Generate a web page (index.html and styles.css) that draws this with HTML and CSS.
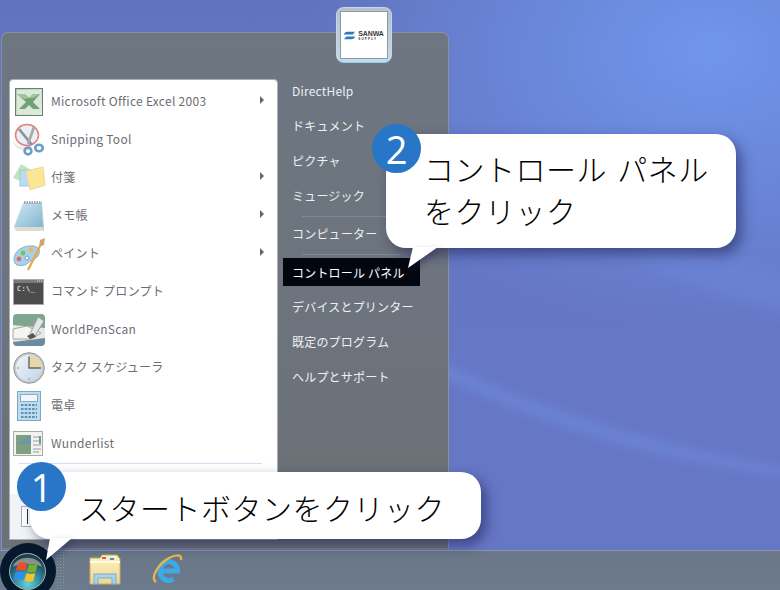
FILE: index.html
```html
<!DOCTYPE html>
<html lang="ja">
<head>
<meta charset="utf-8">
<title>スタートメニュー</title>
<link rel="stylesheet" href="styles.css">
</head>
<body>
<div class="desktop">
  <svg class="wall" viewBox="0 0 780 590"><defs><filter id="soft" x="-20%" y="-50%" width="140%" height="200%"><feGaussianBlur stdDeviation="5"/></filter><filter id="softer" x="-20%" y="-50%" width="140%" height="200%"><feGaussianBlur stdDeviation="10"/></filter></defs><path d="M430 372C530 420 640 462 800 478L800 470C660 446 540 410 430 356z" fill="#7392e4" opacity=".4" filter="url(#soft)"/><path d="M640 262C690 280 740 300 800 318L800 280C750 268 700 256 640 250z" fill="#7392e4" opacity=".3" filter="url(#softer)"/></svg>
  <div class="start-menu">
    <div class="pane-left">
      <ul class="app-list">
        <li class="app"><svg class="icon" viewBox="0 0 32 32"><defs><linearGradient id="xl" x1="0" y1="0" x2="1" y2="1"><stop offset="0" stop-color="#a9c8a8"/><stop offset="1" stop-color="#e9f0e6"/></linearGradient></defs><rect x="2.500" y="2.500" width="27" height="27" fill="url(#xl)" stroke="#62836c"/><rect x="4" y="4" width="24" height="24" fill="#dde8da"/><path d="M4 8h8l4 4 4-4h7l-7 8 7 7h-7l-4-4-4 4H6l7-7z" fill="#6fa374"/><path d="M4 8h8l4 4 4-4h7l-7 4h-4l-4 1-3-1z" fill="#9fc6a0"/></svg><span class="label">Microsoft Office Excel 2003</span><i class="arrow"></i></li>
        <li class="app"><svg class="icon" viewBox="0 0 32 32"><ellipse cx="14" cy="11" rx="11.500" ry="10.500" fill="#e9eff5" stroke="#e4817e" stroke-width="1.5"/><path d="M0 17c3 6 13 7 19 4l-2 5C9 28 1 24 0 17z" fill="#ece8e4"/><path d="M6 5l13 16" stroke="#8a9096" stroke-width="2.600"/><path d="M21 3L15 20" stroke="#a4a9ae" stroke-width="2.600"/><circle cx="15" cy="27" r="3.400" fill="none" stroke="#6d9cc4" stroke-width="2.600"/><ellipse cx="26" cy="24" rx="3.800" ry="3.200" fill="none" stroke="#6d9cc4" stroke-width="2.600"/></svg><span class="label">Snipping Tool</span></li>
        <li class="app"><svg class="icon" viewBox="0 0 32 32"><path d="M0 16L8 2l10 6-6 13z" fill="#c2e6b8"/><rect x="7" y="8" width="13" height="16" fill="#b9dcf2" stroke="#9cc7e6"/><path d="M13 9l17-4 2 18-15 5z" fill="#fbe695" stroke="#ecdb96"/></svg><span class="label">付箋</span><i class="arrow"></i></li>
        <li class="app"><svg class="icon" viewBox="0 0 32 32"><defs><linearGradient id="note" x1="0" y1="0" x2="1" y2="1"><stop offset="0" stop-color="#d3e8f2"/><stop offset="1" stop-color="#7fb6cf"/></linearGradient></defs><path d="M1 27L10 3h19l1 24z" fill="url(#note)"/><path d="M11 2.500h18" stroke="#8b9aa6" stroke-width="2.500" stroke-dasharray="1.500 1"/><path d="M1 27h29l1 4H3z" fill="#dcdcd2"/><path d="M29 3l2 27-1-2z" fill="#b8b8a8"/></svg><span class="label">メモ帳</span><i class="arrow"></i></li>
        <li class="app"><svg class="icon" viewBox="0 0 32 32"><path d="M1 21C1 13 10 7 20 8c6 1 8 5 5 10-3 4-6 3-9 6-3 4-9 4-12 3-2-1-3-3-3-6z" fill="#a9d2e8" stroke="#7fb0cc"/><circle cx="10" cy="15" r="2.400" fill="#7fbf6a"/><circle cx="18" cy="12" r="2.400" fill="#e8b850"/><circle cx="6" cy="21" r="2.400" fill="#df6a6a"/><circle cx="14" cy="20" r="2" fill="#fff" stroke="#6d9cc4"/><path d="M15 32L27 8" stroke="#e8a850" stroke-width="2.400"/><path d="M26 9l1-7 5-2-1 7z" fill="#caa876"/></svg><span class="label">ペイント</span><i class="arrow"></i></li>
        <li class="app"><svg class="icon" viewBox="0 0 32 32"><rect x=".5" y="3.500" width="30" height="25" fill="#7a7a7a" stroke="#a8a8a8"/><rect x="1" y="7" width="29" height="21" fill="#4c4c4c"/><path d="M24 5h5" stroke="#ddd" stroke-dasharray="1 1"/><text class="cmd-text" x="4" y="15">C:\_</text></svg><span class="label">コマンド プロンプト</span></li>
        <li class="app"><svg class="icon" viewBox="0 0 32 32"><rect x="0" y="0" width="32" height="32" rx="4" fill="#e6e8e8"/><path d="M0 4a4 4 0 0 1 4-4h24a4 4 0 0 1 4 4v10L0 11z" fill="#7ea88e"/><path d="M0 15l14-3 14 7-10 6H0z" fill="#f5f5ef" stroke="#a8a8a0"/><path d="M17 20l8-17 6 4-9 15z" fill="#e3e6e8" stroke="#a0a0a0"/><path d="M14 22l6-3 3 4-6 2z" fill="#555"/><path d="M0 28l32-4v4a4 4 0 0 1-4 4H4a4 4 0 0 1-4-4z" fill="#6e8aa0"/></svg><span class="label">WorldPenScan</span></li>
        <li class="app"><svg class="icon" viewBox="0 0 32 32"><defs><linearGradient id="face" x1="0" y1="0" x2="1" y2="1"><stop offset="0" stop-color="#f2f6fa"/><stop offset="1" stop-color="#bfd4e6"/></linearGradient></defs><circle cx="16" cy="16" r="15.300" fill="#c8ccd0" stroke="#8f9498"/><circle cx="16" cy="16" r="13" fill="url(#face)"/><path d="M16 16V3a13 13 0 0 1 13 13z" fill="#e6d8a8"/><path d="M16 5v11h12" stroke="#666" stroke-width="1.400" fill="none"/><path d="M16 4v2M16 26v2M4 16h2M26 16h2" stroke="#889"/></svg><span class="label">タスク スケジューラ</span></li>
        <li class="app"><svg class="icon" viewBox="0 0 32 32"><rect x="4.500" y="1.500" width="23" height="29" fill="#bcdcf0" stroke="#7fa6c2"/><rect x="7.500" y="4.500" width="17" height="7" fill="#f2f6fa" stroke="#8fa8ba"/><path d="M8 15h16M8 19h16M8 23h16M8 27h16" stroke="#5f8fb0" stroke-width="2.200" stroke-dasharray="2.500 1.200"/></svg><span class="label">電卓</span></li>
        <li class="app"><svg class="icon" viewBox="0 0 32 32"><rect x=".5" y="3.500" width="29" height="24" fill="#f1f3f1" stroke="#a8aaa8"/><rect x="3" y="7" width="15" height="19" fill="#7fa07f"/><path d="M3 16l15-9v9z" fill="#6f96a8"/><path d="M20 9h6M20 13h6M20 17h8M20 21h8M20 24h6" stroke="#9a9a9a"/><rect x="26" y="8" width="2" height="8" fill="#6f9f8f"/></svg><span class="label">Wunderlist</span></li>
      </ul>
      <div class="list-rule"></div>
      <div class="search"><div class="search-box"></div></div>
    </div>
    <div class="pane-right">
      <a class="link">DirectHelp</a>
      <a class="link">ドキュメント</a>
      <a class="link">ピクチャ</a>
      <a class="link">ミュージック</a>
      <div class="rule"></div>
      <a class="link link-system">コンピューター</a>
      <div class="rule"></div>
      <a class="link active">コントロール パネル</a>
      <a class="link">デバイスとプリンター</a>
      <a class="link">既定のプログラム</a>
      <a class="link">ヘルプとサポート</a>
    </div>
  </div>
  <div class="user-tile">
    <div class="user-pic">
      <svg class="sanwa-mark" viewBox="0 0 12 12"><path d="M0 5c0-2 2-3 4-3h8L9.500 4.800H5C3 4.800 1 5 0 5zM12 7c0 2-2 3-4 3H0l2.500-2.800H7C9 7.200 11 7 12 7z" fill="#2b79c2"/></svg>
      <div class="sanwa-text"><span class="sanwa-big">SANWA</span><span class="sanwa-small">SUPPLY</span></div>
    </div>
  </div>

  <div class="taskbar">
    <div class="orb-glow"><svg class="orb" viewBox="0 0 38 38"><defs><radialGradient id="o" cx="50%" cy="85%" r="75%"><stop offset="0" stop-color="#63d4d8"/><stop offset=".55" stop-color="#2a7f94"/><stop offset="1" stop-color="#1b3f4c"/></radialGradient></defs><circle cx="19" cy="19" r="18.500" fill="url(#o)" stroke="#aab8bc"/><path d="M4 14C8 2 30 2 34 14 26 10 12 10 4 14z" fill="#d8c8b8" opacity=".55"/><path d="M9 11c3-2 7-2 10-.5l-2 8c-3-1.500-7-1.500-10 0z" fill="#e8502a"/><path d="M20.500 11c3 1.500 6 1.500 9 0l-2 8c-3 1.500-6 1.500-9 0z" fill="#78ad2e"/><path d="M6.500 20c3-1.500 7-1.500 10 0l-2 8c-3-1.500-7-1.500-10 0z" fill="#2f8fe0"/><path d="M18 20.500c3 1.500 6 1.500 9 0l-2 8c-3 1.500-6 1.500-9 0z" fill="#f6c22a"/></svg></div>
    <div class="grip"></div>
    <div class="tasks">
      <svg class="task-icon" viewBox="0 0 32 32"><defs><linearGradient id="fold" x1="0" y1="0" x2="0" y2="1"><stop offset="0" stop-color="#fff4c4"/><stop offset="1" stop-color="#eed58f"/></linearGradient></defs><path d="M1 5h10l2-3h15l3 4v25H1z" fill="url(#fold)" stroke="#c8ac6a"/><rect x="5" y="3" width="4" height="2" fill="#5aa75a"/><rect x="13" y="4" width="4" height="2" fill="#c0675a"/><rect x="21" y="5" width="4" height="2" fill="#4a8fc8"/><path d="M1 9h30" stroke="#fffbe6" stroke-width="2"/><path d="M5 21h22v10h-4v-6H9v6H5z" fill="#a9d2ea" stroke="#79aed0"/></svg>
      <svg class="task-icon" viewBox="0 0 32 32"><path d="M9 18h17.500a8.800 9.500 0 1 0-4 8" fill="none" stroke="#3fa9e6" stroke-width="5"/><path d="M5 29C-1 25 7 11 18 5c7-3.500 13-4 12 2" fill="none" stroke="#e8b840" stroke-width="2.400"/></svg>
    </div>
  </div>

  <div class="bubble bubble-one">
    <p class="bubble-text">スタートボタンをクリック</p>
    <svg class="tail tail-one" viewBox="0 0 26 22"><path d="M4 0L0 22 26 0z" fill="#fff"/></svg>
    <span class="step step-one">1</span>
  </div>
  <div class="bubble bubble-two">
    <p class="bubble-text">コントロール パネル<br>をクリック</p>
    <svg class="tail tail-two" viewBox="0 0 30 21"><path d="M5 0L0 21 30 0z" fill="#fff"/></svg>
    <span class="step step-two">2</span>
  </div>
</div>
</body>
</html>
```
FILE: styles.css
```css
* { box-sizing: border-box; }
html, body { margin: 0; padding: 0; }
body { font-family: "Noto Sans CJK JP", "Noto Sans", sans-serif; }
.desktop {
  position: relative;
  width: 780px;
  height: 590px;
  overflow: hidden;
  background:
    radial-gradient(ellipse 400px 280px at 710px 50px, #7096ec 0%, rgba(112,150,236,0) 100%),
    linear-gradient(180deg, #6173be 0%, #6677c6 60%, #6677c6 100%);
}
.wall { position: absolute; left: 0; top: 0; width: 780px; height: 590px; }
.start-menu {
  position: absolute;
  left: 1px;
  top: 32px;
  width: 448px;
  height: 517px;
  display: flex;
  padding: 46px 0 8px 7px;
  border: 1px solid #8b929a;
  border-bottom-color: #7b8188;
  border-radius: 7px 7px 0 0;
  background: linear-gradient(180deg, #6d7681 0%, #6d747d 50%, #6c7076 100%);
}
.pane-left {
  width: 269px;
  display: flex;
  flex-direction: column;
  background: #fff;
  border: 1px solid #a9b0b8;
  border-radius: 4px 4px 0 0;
}
.app-list {
  list-style: none;
  margin: 1px 0 0;
  padding: 0;
}
.app {
  display: flex;
  align-items: center;
  height: 38px;
  padding-left: 3px;
  font-size: 12px;
  letter-spacing: .28px;
  color: #6c6c75;
}
.icon { width: 32px; height: 32px; flex: none; margin-top: 4px; overflow: visible; }
.label { margin-left: 6px; flex: 1; }
.arrow {
  width: 0;
  height: 0;
  margin-right: 13px;
  border-left: 4px solid #666;
  border-top: 4px solid transparent;
  border-bottom: 4px solid transparent;
}
.cmd-text { font-family: "DejaVu Sans Mono", monospace; font-size: 7px; fill: #fff; }
.list-rule {
  height: 1px;
  margin: 2px 15px 0 9px;
  background: #cfe0f0;
}
.search {
  margin-top: auto;
  height: 45px;
  padding: 12px 0 0 11px;
  background: #f1f4f7;
}
.search-box {
  position: relative;
  width: 200px;
  height: 21px;
  background: #fff;
  border: 1px solid #aab;
}
.search-box::before {
  content: "";
  position: absolute;
  left: 5px;
  top: 2px;
  width: 1px;
  height: 15px;
  background: #333;
}
.pane-right {
  flex: 1;
  display: flex;
  flex-direction: column;
  margin-top: -6px;
  padding-left: 5px;
}
.link {
  display: flex;
  align-items: center;
  flex: none;
  width: 137px;
  height: 35px;
  padding-left: 9px;
  font-size: 12px;
  letter-spacing: .2px;
  color: #eef0f2;
}
.link-system { height: 33px; }
.rule {
  flex: none;
  width: 98px;
  height: 1px;
  margin: 3px 0 0 19px;
  background: rgba(150,165,180,.45);
}
.link-system + .rule { margin-top: 4px; }
.rule + .active { margin-top: 3px; margin-bottom: 3px; }
.link.active {
  height: 28px;
  background: #02070f;
  color: #fff;
}
.user-tile {
  position: absolute;
  left: 336px;
  top: 7px;
  width: 56px;
  height: 56px;
  padding: 3px;
  border: 1px solid #c7d6e6;
  border-bottom-color: #8fd0ee;
  border-radius: 8px;
  background: linear-gradient(180deg, #b4c0cc, #c4dcec);
}
.user-pic {
  display: flex;
  align-items: center;
  justify-content: center;
  gap: 3px;
  width: 100%;
  height: 100%;
  background: #fff;
  border: 1px solid #8f9aa6;
}
.sanwa-mark { width: 11px; height: 11px; }
.sanwa-text { display: flex; flex-direction: column; font-family: "Liberation Sans", sans-serif; color: #3a3a3a; line-height: 1; }
.sanwa-big { font-size: 7px; font-weight: 700; letter-spacing: -.1px; }
.sanwa-small { font-size: 3px; font-weight: 700; letter-spacing: 1.200px; margin-top: 1px; }
.taskbar {
  position: absolute;
  left: 0;
  top: 550px;
  width: 780px;
  height: 40px;
  display: flex;
  border-top: 1px solid #8e99a6;
  background: linear-gradient(180deg, #6a7787, #6c7a8e);
}
.orb-glow {
  position: relative;
  flex: none;
  width: 56px;
  height: 39px;
}
.orb-glow::before {
  content: "";
  position: absolute;
  left: 0;
  top: -8px;
  width: 56px;
  height: 56px;
  border-radius: 50%;
  background: #06182b;
}
.orb { position: absolute; left: 9px; top: 2px; width: 37px; height: 37px; }
.grip {
  flex: none;
  width: 10px;
  background-image: radial-gradient(circle, #8a95a3 0.7px, transparent 1px);
  background-size: 3px 3px;
}
.tasks { display: flex; gap: 30px; padding: 2px 0 0 23px; }
.task-icon { width: 32px; height: 32px; }
.bubble {
  position: absolute;
  background: #fff;
  border-radius: 20px;
  box-shadow: 5px 6px 13px rgba(25,30,80,.55);
}
.bubble-one { left: 30px; top: 472px; width: 451px; height: 67px; padding: 14px 0 0 49px; }
.bubble-two { left: 386px; top: 134px; width: 350px; height: 114px; padding: 13px 0 0 38px; word-spacing: 3px; }
.bubble-text {
  margin: 0;
  font-size: 30px;
  font-weight: 300;
  letter-spacing: .5px;
  line-height: 42px;
  color: #000;
  white-space: nowrap;
}
.tail { position: absolute; display: block; filter: drop-shadow(3px 3px 3px rgba(25,30,80,.4)); }
.tail-one { left: 16px; top: 66px; width: 26px; height: 22px; }
.tail-two { left: 22px; top: 113px; width: 30px; height: 21px; }
.step {
  position: absolute;
  display: flex;
  align-items: center;
  justify-content: center;
  width: 49px;
  height: 49px;
  border-radius: 50%;
  background: #2876c8;
  color: #fff;
  font-family: "Open Sans", "Noto Sans", sans-serif;
  font-size: 38px;
  line-height: 1;
}
.step-one { left: -13px; top: -10px; }
.step-two { left: -14px; top: -10px; }
```
